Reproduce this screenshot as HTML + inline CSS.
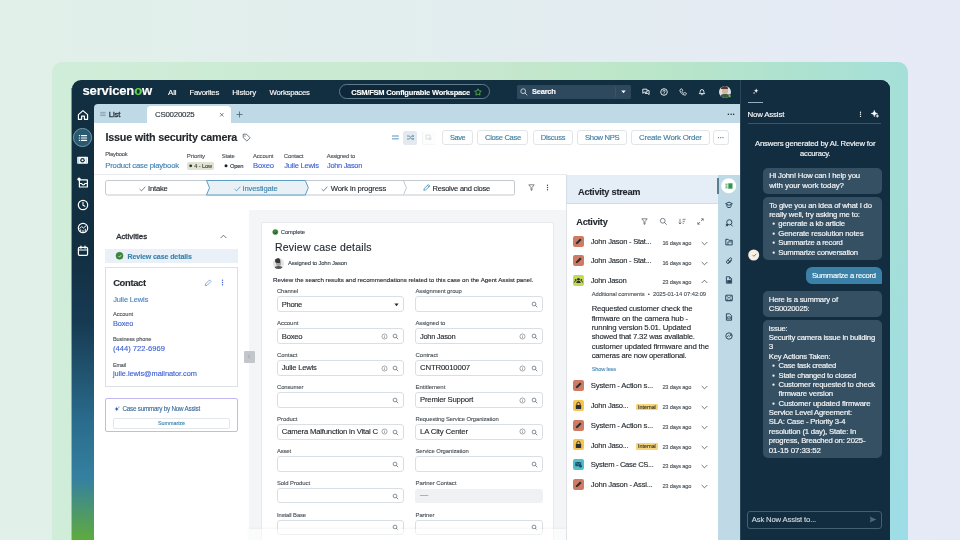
<!DOCTYPE html>
<html lang="en"><head><meta charset="utf-8"><title>CSM/FSM Configurable Workspace</title>
<style>
html,body{margin:0;padding:0}
body{width:960px;height:540px;overflow:hidden;position:relative;font-family:"Liberation Sans",sans-serif;background:linear-gradient(90deg,#e1f0e9 0%,#e3edf0 55%,#e6eaf7 100%)}
.b{position:absolute;box-sizing:border-box;display:block}
.t{position:absolute;white-space:pre;line-height:1;display:block;-webkit-text-stroke-width:.12px}
svg{overflow:visible}
#w{position:absolute;left:0;top:0;width:960px;height:540px;will-change:transform}
</style></head><body><div id="w">
<div class="b" style="left:52.00px;top:62.00px;width:856.00px;height:478.00px;border-radius:10px 10px 0 0;background:linear-gradient(125deg,rgba(149,218,251,0) 80%,rgba(149,218,251,.45) 100%),linear-gradient(90deg,#d0edd9 0%,#c7e8ce 50%,#bce6c8 68%,#aee2cf 86%,#a4dfd8 100%);"></div>
<div class="b" style="left:72.00px;top:80.00px;width:818.00px;height:460.00px;background:#122e41;border-radius:9px 9px 0 0;"></div>
<div class="b" style="left:71.00px;top:88.00px;width:1.00px;height:452.00px;opacity:.45;background:linear-gradient(180deg,#122e41 0%,#122e41 35.8%,#173a53 52%,#2a6d8e 74%,#3580a0 87%,#4a9570 93%,#5fab3e 100%);"></div>
<div class="b" style="left:72.00px;top:250.00px;width:22.00px;height:290.00px;background:linear-gradient(180deg,#122e41 0%,#173a53 25%,#2a6d8e 60%,#3580a0 79%,#4a9570 89%,#5fab3e 100%);"></div>
<div class="b" style="left:740.00px;top:80.00px;width:150.00px;height:460.00px;background:#122d40;border-radius:0 9px 0 0;border-left:1px solid #2a4657;"></div>
<span class="t" style="left:82.50px;top:84px;font-size:13.1px;color:#fff;letter-spacing:-0.186px;font-weight:700;">servicen<span style="color:#62d64a">o</span>w</span>
<span class="t" style="left:168.00px;top:89px;font-size:8.0px;color:#fff;letter-spacing:-0.130px;">All</span>
<span class="t" style="left:189.50px;top:89px;font-size:7.8px;color:#fff;letter-spacing:-0.286px;">Favorites</span>
<span class="t" style="left:232.20px;top:89px;font-size:8.0px;color:#fff;letter-spacing:-0.156px;">History</span>
<span class="t" style="left:269.50px;top:89px;font-size:7.8px;color:#fff;letter-spacing:-0.257px;">Workspaces</span>
<div class="b" style="left:339.20px;top:84.20px;width:151.30px;height:15.00px;background:#0f2839;border:1px solid #617c8c;border-radius:8px;"></div>
<span class="t" style="left:351.20px;top:89px;font-size:7.5px;color:#fff;letter-spacing:-0.203px;font-weight:700;">CSM/FSM Configurable Workspace</span>
<svg class="b" style="left:473.50px;top:87.50px;" width="8" height="8" viewBox="0 0 8 8"><path d="M4 .8l1 2.1 2.3.3-1.7 1.6.4 2.3L4 6 1.9 7.1l.4-2.3L.7 3.2 3 2.9z" fill="none" stroke="#58bd47" stroke-width=".8" stroke-linejoin="round"/></svg>
<div class="b" style="left:517.00px;top:85.00px;width:113.80px;height:13.80px;background:#2e495d;border-radius:1.5px;"></div>
<div class="b" style="left:615.00px;top:87.00px;width:1.00px;height:10.00px;background:#3a5467;"></div>
<svg class="b" style="left:520.30px;top:88.00px;" width="8" height="8" viewBox="0 0 8 8"><circle cx="3.200" cy="3.200" r="2.400" fill="none" stroke="#dfe6ea" stroke-width=".8"/><path d="M5 5L7 7" stroke="#dfe6ea" stroke-width=".8" stroke-linecap="round"/></svg>
<span class="t" style="left:532.00px;top:88px;font-size:7.5px;color:#fff;letter-spacing:-0.236px;font-weight:700;">Search</span>
<svg class="b" style="left:620.50px;top:90.00px;" width="5" height="4" viewBox="0 0 5 4"><path d="M.3.5h4.4L2.5 3.3z" fill="#fff"/></svg>
<svg class="b" style="left:642.00px;top:87.50px;" width="8" height="8" viewBox="0 0 8 8"><path d="M.8 1.2h4.2v3H2.2L.8 5.3z" fill="none" stroke="#f4f7f9" stroke-width=".9" stroke-linejoin="round"/><path d="M3.2 4.4v1.1h2.6l1.3 1.1V2.6H5.3" fill="none" stroke="#f4f7f9" stroke-width=".9" stroke-linejoin="round"/></svg>
<svg class="b" style="left:660.20px;top:87.50px;" width="8" height="8" viewBox="0 0 8 8"><circle cx="4" cy="4" r="3.3" fill="none" stroke="#f4f7f9" stroke-width=".9"/><path d="M2.9 3.2a1.1 1.1 0 1 1 1.6 1c-.4.2-.5.4-.5.8" fill="none" stroke="#f4f7f9" stroke-width=".9" stroke-linecap="round"/><circle cx="4" cy="6" r=".45" fill="#f4f7f9"/></svg>
<svg class="b" style="left:679.30px;top:87.50px;" width="8" height="8" viewBox="0 0 8 8"><path d="M2 .9c.5-.3 1-.1 1.200.400l.4 1c.1.400-.1.700-.4.900l-.3.200c.4.900 1 1.500 1.900 1.900l.2-.3c.2-.3.500-.5.900-.4l1 .4c.5.200.7.700.4 1.200-.4.700-1.100 1-1.900.800C3.300 6.600 1.400 4.700.9 2.700.8 2 1.300 1.300 2 .9z" fill="none" stroke="#f4f7f9" stroke-width=".85" stroke-linejoin="round"/></svg>
<svg class="b" style="left:698.00px;top:87.50px;" width="8" height="8" viewBox="0 0 8 8"><path d="M1.300 5.600c.7-.5.900-1.200.9-2.200a1.800 1.800 0 0 1 3.600 0c0 1 .2 1.700.9 2.200z" fill="none" stroke="#f4f7f9" stroke-width=".9" stroke-linejoin="round"/><path d="M3.300 6.600a.8.800 0 0 0 1.400 0" fill="none" stroke="#f4f7f9" stroke-width=".9" stroke-linecap="round"/></svg>
<div class="b" style="left:718.50px;top:85.50px;width:12.40px;height:12.40px;border-radius:50%;background:#dfe3e3;overflow:hidden;"><i style="position:absolute;left:3.200px;top:1.300px;width:6.200px;height:7px;border-radius:3px 3px 2.600px 2.600px;background:#d9b39a"></i><i style="position:absolute;left:2.800px;top:.6px;width:7px;height:3.200px;border-radius:3px 3px 0 0;background:#4a3a30"></i><i style="position:absolute;left:1px;top:8.600px;width:10.400px;height:5px;border-radius:4px 4px 0 0;background:#3f5a4a"></i></div>
<svg class="b" style="left:726.00px;top:93.00px" width="8" height="8" viewBox="0 0 8 8"><circle cx="3.5" cy="3" r="1.5" fill="#6fcf3d" stroke="#122e41" stroke-width="0.5"/></svg>
<svg class="b" style="left:76.50px;top:109.00px;" width="11.99" height="11.99" viewBox="0 0 11 11"><path d="M1.300 5.200L5.500 1.500l4.200 3.700v4.300H6.800V6.600H4.200v2.900H1.300z" fill="none" stroke="#ffffff" stroke-width="1.100" stroke-linejoin="round"/></svg>
<svg class="b" style="left:71.00px;top:126.00px" width="24.2" height="24.2" viewBox="0 0 24.2 24.2"><circle cx="11.5" cy="11.5" r="9.1" fill="#2b5970" stroke="#7199aa" stroke-width="1"/></svg>
<svg class="b" style="left:77.50px;top:132.50px;" width="10" height="10" viewBox="0 0 10 10"><g stroke="#ffffff" stroke-width="1.100" stroke-linecap="round"><path d="M3.400 2.600h5.200M3.400 5h5.200M3.400 7.400h5.200"/><path d="M1.300 2.600h.3M1.300 5h.3M1.300 7.400h.3"/></g></svg>
<svg class="b" style="left:77.00px;top:155.00px;" width="11" height="10" viewBox="0 0 11 10"><rect x=".2" y="1.800" width="10.800" height="6.900" rx=".8" fill="#ffffff"/><circle cx="5.500" cy="5.250" r="2.300" fill="#122e41"/><circle cx="5.500" cy="5.250" r="1.100" fill="#ffffff"/><path d="M1.700 2.500v5.500M9.300 2.500v5.500" stroke="#9fb8c8" stroke-width=".7"/></svg>
<svg class="b" style="left:76.50px;top:176.50px;" width="11.99" height="11.99" viewBox="0 0 11 11"><path d="M2.200 2.600h7.300v6.600H2.200z" fill="none" stroke="#ffffff" stroke-width="1.100" stroke-linejoin="round"/><path d="M2.200 5.900h2.100c.2 1 .7 1.300 1.500 1.300s1.300-.3 1.500-1.300h2.200" fill="none" stroke="#ffffff" stroke-width="1"/><circle cx="1.900" cy="2" r="1.500" fill="#ffffff"/></svg>
<svg class="b" style="left:76.50px;top:199.00px;" width="11.99" height="11.99" viewBox="0 0 11 11"><circle cx="5.500" cy="5.500" r="4.300" fill="none" stroke="#ffffff" stroke-width="1.100"/><path d="M5.500 3v2.700l1.700 1" fill="none" stroke="#ffffff" stroke-width="1" stroke-linecap="round"/></svg>
<svg class="b" style="left:76.50px;top:221.50px;" width="11.99" height="11.99" viewBox="0 0 11 11"><circle cx="5.500" cy="5.500" r="4.300" fill="none" stroke="#ffffff" stroke-width="1.100"/><path d="M2.300 6.200l2-2 1.600 1.300 2.600-2.300M3.400 9V6.800M5.500 9.300V7.300M7.600 9V6.200" fill="none" stroke="#ffffff" stroke-width=".9"/></svg>
<svg class="b" style="left:76.50px;top:244.50px;" width="11.99" height="11.99" viewBox="0 0 11 11"><rect x="1.300" y="2.200" width="8.400" height="7.300" rx="1" fill="none" stroke="#ffffff" stroke-width="1.100"/><path d="M1.300 4.600h8.400M3.600 1v2M7.400 1v2" stroke="#ffffff" stroke-width="1.100" stroke-linecap="round"/></svg>
<div class="b" style="left:94.00px;top:103.80px;width:646.00px;height:19.00px;background:#c0d9e6;border-radius:4px 0 0 0;"></div>
<svg class="b" style="left:100.00px;top:111.00px;" width="6" height="6" viewBox="0 0 6 6"><path d="M.2 1.400h5.400M.2 3h5.400M.2 4.600h5.400" stroke="#7d9bb0" stroke-width=".8"/></svg>
<span class="t" style="left:108.80px;top:111px;font-size:7.8px;color:#28323a;letter-spacing:-0.185px;-webkit-text-stroke-width:.3px;">List</span>
<div class="b" style="left:147.00px;top:106.00px;width:83.50px;height:17.00px;background:#fff;border-radius:4px 4px 0 0;"></div>
<span class="t" style="left:155.00px;top:111px;font-size:7.9px;color:#28323a;letter-spacing:-0.248px;">CS0020025</span>
<svg class="b" style="left:218.50px;top:111.80px;" width="5.5" height="5.5" viewBox="0 0 5.5 5.5"><path d="M1 1l3.500 3.500M4.500 1L1 4.500" stroke="#4a555d" stroke-width=".7"/></svg>
<svg class="b" style="left:236.00px;top:110.50px;" width="7" height="7" viewBox="0 0 7 7"><path d="M3.500.5v6M.5 3.500h6" stroke="#44657c" stroke-width=".8"/></svg>
<span class="t" style="left:727.50px;top:112px;font-size:5.0px;color:#1f2a33;letter-spacing:0.916px;">•••</span>
<div class="b" style="left:94.00px;top:122.60px;width:646.00px;height:418.00px;background:#fff;"></div>
<span class="t" style="left:105.50px;top:132px;font-size:10.8px;color:#23292e;letter-spacing:-0.230px;font-weight:700;">Issue with security camera</span>
<svg class="b" style="left:241.50px;top:133.00px;" width="9" height="9" viewBox="0 0 9 9"><path d="M1.200 1.200h3.300l3.600 3.600-3.300 3.300L1.200 4.500z" fill="none" stroke="#4a555d" stroke-width=".8" stroke-linejoin="round"/><circle cx="3" cy="3" r=".6" fill="#4a555d"/></svg>
<svg class="b" style="left:392.00px;top:135.00px;" width="7" height="5" viewBox="0 0 7 5"><path d="M0 1h6.800M0 3.800h6.800" stroke="#90b7d6" stroke-width="1.600"/></svg>
<div class="b" style="left:403.00px;top:130.50px;width:14.20px;height:14.20px;background:#e3e9ef;border-radius:2px;"></div>
<svg class="b" style="left:405.80px;top:133.40px;" width="9" height="9" viewBox="0 0 9 9"><g fill="none" stroke="#3f86a8" stroke-width=".8"><path d="M1 3h2c1.500 0 1.500 3 3 3h1.500M1 6h2c.6 0 1-.4 1.300-.9M5 3.800C5.300 3.300 5.600 3 6 3h1.500"/><path d="M6.600 1.900L7.700 3 6.600 4.100M6.600 4.900L7.700 6 6.600 7.100"/></g></svg>
<div class="b" style="left:421.50px;top:130.50px;width:14.20px;height:14.20px;background:#fdfdfd;border-radius:2px;border-left:1px solid #f1f2f3;border-bottom:1px solid #f4f5f6;"></div>
<svg class="b" style="left:425.00px;top:134.00px;" width="7" height="7" viewBox="0 0 7 7"><path d="M1 1h4.200v3.400H2.600L1 5.600z" fill="none" stroke="#d8dde1" stroke-width=".9"/><path d="M3.300 5.500h2.600V3" fill="none" stroke="#d8dde1" stroke-width=".9"/></svg>
<div class="b" style="left:442.00px;top:130.00px;width:31.00px;height:14.70px;background:#fff;border:1px solid #e1e5e8;border-radius:3px;"></div>
<span class="t" style="left:450.00px;top:134px;font-size:7.4px;color:#3a7c9f;letter-spacing:-0.417px;">Save</span>
<div class="b" style="left:476.80px;top:130.00px;width:51.50px;height:14.70px;background:#fff;border:1px solid #e1e5e8;border-radius:3px;"></div>
<span class="t" style="left:485.00px;top:134px;font-size:7.6px;color:#3a7c9f;letter-spacing:-0.348px;">Close Case</span>
<div class="b" style="left:532.50px;top:130.00px;width:40.80px;height:14.70px;background:#fff;border:1px solid #e1e5e8;border-radius:3px;"></div>
<span class="t" style="left:540.80px;top:134px;font-size:7.6px;color:#3a7c9f;letter-spacing:-0.301px;">Discuss</span>
<div class="b" style="left:577.20px;top:130.00px;width:49.80px;height:14.70px;background:#fff;border:1px solid #e1e5e8;border-radius:3px;"></div>
<span class="t" style="left:585.00px;top:134px;font-size:7.7px;color:#3a7c9f;letter-spacing:-0.367px;">Show NPS</span>
<div class="b" style="left:631.20px;top:130.00px;width:78.80px;height:14.70px;background:#fff;border:1px solid #e1e5e8;border-radius:3px;"></div>
<span class="t" style="left:639.00px;top:134px;font-size:7.9px;color:#3a7c9f;letter-spacing:-0.223px;">Create Work Order</span>
<div class="b" style="left:713.30px;top:130.00px;width:15.50px;height:14.70px;background:#fff;border:1px solid #e1e5e8;border-radius:3px;"></div>
<span class="t" style="left:717.80px;top:136px;font-size:4.0px;color:#3a7c9f;letter-spacing:0.833px;">•••</span>
<span class="t" style="left:105.30px;top:152px;font-size:5.8px;color:#4a5258;letter-spacing:-0.208px;">Playbook</span>
<span class="t" style="left:105.30px;top:162px;font-size:7.7px;color:#3d7fb4;letter-spacing:-0.200px;">Product case playbook</span>
<span class="t" style="left:186.80px;top:153px;font-size:6.1px;color:#4a5258;letter-spacing:-0.098px;">Priority</span>
<div class="b" style="left:187.00px;top:162.00px;width:27.00px;height:7.50px;background:#e0e3d0;border-radius:2px;"></div>
<svg class="b" style="left:188.00px;top:163.00px" width="6.8" height="6.8" viewBox="0 0 6.8 6.8"><circle cx="2.7" cy="2.8" r="1.4" fill="#2a2f33"/></svg>
<span class="t" style="left:194.20px;top:164px;font-size:5.6px;color:#3c4146;letter-spacing:-0.081px;">4 - Low</span>
<span class="t" style="left:221.80px;top:154px;font-size:5.9px;color:#4a5258;letter-spacing:-0.215px;">State</span>
<svg class="b" style="left:223.00px;top:163.00px" width="7" height="7" viewBox="0 0 7 7"><circle cx="3" cy="2.8" r="1.5" fill="#1d2226"/></svg>
<span class="t" style="left:230.00px;top:164px;font-size:5.8px;color:#2a2f33;letter-spacing:-0.247px;">Open</span>
<span class="t" style="left:253.00px;top:154px;font-size:5.9px;color:#4a5258;letter-spacing:-0.146px;">Account</span>
<span class="t" style="left:253.00px;top:162px;font-size:7.7px;color:#3b5fd2;letter-spacing:-0.207px;">Boxeo</span>
<span class="t" style="left:283.80px;top:153px;font-size:6.0px;color:#4a5258;letter-spacing:-0.168px;">Contact</span>
<span class="t" style="left:284.30px;top:162px;font-size:7.6px;color:#3b5fd2;letter-spacing:-0.243px;">Julie Lewis</span>
<span class="t" style="left:326.80px;top:154px;font-size:5.8px;color:#4a5258;letter-spacing:-0.192px;">Assigned to</span>
<span class="t" style="left:327.00px;top:162px;font-size:7.4px;color:#3b5fd2;letter-spacing:-0.285px;">John Jason</span>
<div class="b" style="left:94.00px;top:174.30px;width:472.50px;height:1.00px;background:#e8eaed;"></div>
<svg class="b" style="left:105.00px;top:180.00px;" width="410" height="16" viewBox="0 0 410 16">
<path d="M.5 2.500a2 2 0 0 1 2-2H408a1.500 1.500 0 0 1 1.500 1.500v11.500a1.500 1.500 0 0 1 -1.500 1.500H2.500a2 2 0 0 1 -2-2z" fill="#fff" stroke="#c3cad0" stroke-width="1"/>
<path d="M101.500.5H200.300L203.300 7.750 200.300 15H101.500L104.500 7.750z" fill="#e9f1f6" stroke="#5c9dc2" stroke-width="1" stroke-linejoin="round"/>
<path d="M298.500.8L301.500 7.750 298.500 14.700" fill="none" stroke="#c3cad0" stroke-width="1"/>
</svg>
<svg class="b" style="left:139.10px;top:186.00px;" width="7" height="5.5" viewBox="0 0 7 5.5"><path d="M.6 3l1.900 1.900L6.300.7" fill="none" stroke="#5a646b" stroke-width=".8"/></svg>
<span class="t" style="left:148.00px;top:185px;font-size:7.6px;color:#23292e;letter-spacing:-0.184px;">Intake</span>
<svg class="b" style="left:234.10px;top:186.00px;" width="7" height="5.5" viewBox="0 0 7 5.5"><path d="M.6 3l1.900 1.900L6.300.7" fill="none" stroke="#4f93b8" stroke-width=".8"/></svg>
<span class="t" style="left:242.50px;top:185px;font-size:7.6px;color:#3a83ab;letter-spacing:-0.151px;">Investigate</span>
<svg class="b" style="left:321.20px;top:186.00px;" width="7" height="5.5" viewBox="0 0 7 5.5"><path d="M.6 3l1.900 1.900L6.300.7" fill="none" stroke="#5a646b" stroke-width=".8"/></svg>
<span class="t" style="left:330.80px;top:185px;font-size:7.7px;color:#23292e;letter-spacing:-0.160px;">Work in progress</span>
<svg class="b" style="left:423.00px;top:184.30px;" width="8" height="7" viewBox="0 0 8 7"><path d="M.8 6.300l.5-2L5.400.6l1.500 1.500-4.100 3.700zM4.500 1.500l1.500 1.500" fill="none" stroke="#4a90b6" stroke-width=".85" stroke-linejoin="round"/></svg>
<span class="t" style="left:432.50px;top:185px;font-size:7.5px;color:#23292e;letter-spacing:-0.223px;">Resolve and close</span>
<svg class="b" style="left:528.00px;top:184.00px;" width="7" height="7" viewBox="0 0 7 7"><path d="M.8.800h5.400L4 3.600v2.600H3V3.600z" fill="none" stroke="#4a555d" stroke-width=".7" stroke-linejoin="round"/></svg>
<svg class="b" style="left:545.50px;top:184.00px;" width="3" height="7" viewBox="0 0 3 7"><circle cx="1.500" cy="1.200" r=".7" fill="#3a444b"/><circle cx="1.500" cy="3.500" r=".7" fill="#3a444b"/><circle cx="1.500" cy="5.800" r=".7" fill="#3a444b"/></svg>
<span class="t" style="left:116.20px;top:233px;font-size:7.9px;color:#2a3036;letter-spacing:-0.017px;-webkit-text-stroke:.3px #2a3036;">Activities</span>
<svg class="b" style="left:219.50px;top:233.50px;" width="7" height="5" viewBox="0 0 7 5"><path d="M.7 4L3.500 1.200 6.300 4" fill="none" stroke="#4a555d" stroke-width=".8"/></svg>
<div class="b" style="left:105.00px;top:249.00px;width:132.50px;height:14.00px;background:#e9f0f8;"></div>
<svg class="b" style="left:114.00px;top:250.00px" width="12" height="12" viewBox="0 0 12 12"><circle cx="5.5" cy="5.8" r="3.5" fill="#3a8a36" stroke="#2c6a2a" stroke-width="0.5"/></svg>
<svg class="b" style="left:117.50px;top:253.80px;" width="4" height="4" viewBox="0 0 4 4"><path d="M.6 2.100l1 1L3.400.9" fill="none" stroke="#fff" stroke-width=".7"/></svg>
<span class="t" style="left:127.50px;top:254px;font-size:7.1px;color:#3a83ab;letter-spacing:-0.126px;font-weight:700;">Review case details</span>
<div class="b" style="left:105.00px;top:267.00px;width:133.00px;height:119.50px;background:#fff;border:1px solid #dbe0e4;"></div>
<span class="t" style="left:113.20px;top:278px;font-size:9.4px;color:#23292e;letter-spacing:-0.341px;font-weight:700;">Contact</span>
<svg class="b" style="left:203.50px;top:278.50px;" width="8" height="8" viewBox="0 0 8 8"><path d="M1.200 6.800l.5-2L5.600.9l1.500 1.500-3.900 3.900z" fill="none" stroke="#5b86d8" stroke-width=".7" stroke-linejoin="round"/></svg>
<svg class="b" style="left:221.30px;top:279.00px;" width="3" height="7" viewBox="0 0 3 7"><circle cx="1.500" cy="1.200" r=".7" fill="#3b5fd2"/><circle cx="1.500" cy="3.500" r=".7" fill="#3b5fd2"/><circle cx="1.500" cy="5.800" r=".7" fill="#3b5fd2"/></svg>
<span class="t" style="left:113.20px;top:296px;font-size:7.4px;color:#4682bd;letter-spacing:-0.100px;">Julie Lewis</span>
<span class="t" style="left:113.00px;top:312px;font-size:5.7px;color:#4a5258;letter-spacing:-0.085px;">Account</span>
<span class="t" style="left:113.00px;top:320px;font-size:7.4px;color:#3b5fd2;letter-spacing:-0.137px;">Boxeo</span>
<span class="t" style="left:113.00px;top:337px;font-size:5.6px;color:#4a5258;letter-spacing:-0.111px;">Business phone</span>
<span class="t" style="left:113.00px;top:345px;font-size:7.6px;color:#3b5fd2;letter-spacing:0.002px;">(444) 722-6969</span>
<span class="t" style="left:113.00px;top:363px;font-size:5.5px;color:#4a5258;letter-spacing:-0.191px;">Email</span>
<span class="t" style="left:113.00px;top:370px;font-size:7.4px;color:#3b5fd2;letter-spacing:-0.050px;">julie.lewis@mailnator.com</span>
<div class="b" style="left:105.00px;top:398.00px;width:133.00px;height:33.50px;background:#fff;border:1px solid #c2b9f4;border-radius:2px;"></div>
<svg class="b" style="left:113.80px;top:406.00px;" width="6" height="6" viewBox="0 0 6 6"><path d="M2.700.6c.3 1.700.8 2.200 2.500 2.500-1.700.3-2.200.8-2.500 2.500-.3-1.700-.8-2.200-2.500-2.500 1.700-.3 2.200-.8 2.500-2.500z" fill="#2f5fb0"/><circle cx="4.900" cy="1.100" r=".55" fill="#2f5fb0"/></svg>
<span class="t" style="left:122.50px;top:406px;font-size:6.3px;color:#3d6c9c;letter-spacing:-0.224px;">Case summary by Now Assist</span>
<div class="b" style="left:113.00px;top:418.00px;width:117.00px;height:10.60px;background:#fff;border:1px solid #e3e7ea;border-radius:2px;"></div>
<span class="t" style="left:158.00px;top:421px;font-size:5.4px;color:#3a83ab;letter-spacing:-0.034px;">Summarize</span>
<div class="b" style="left:249.30px;top:210.00px;width:317.00px;height:330.00px;background:#f4f5f6;"></div>
<div class="b" style="left:244.00px;top:351.00px;width:11.00px;height:11.50px;background:#c3c7cb;border-radius:1px;"></div>
<svg class="b" style="left:247.30px;top:354.30px;" width="4" height="5" viewBox="0 0 4 5"><path d="M2.800.8L1.200 2.500l1.600 1.700" fill="none" stroke="#8a9096" stroke-width=".7"/></svg>
<div class="b" style="left:261.30px;top:222.00px;width:293.00px;height:320.00px;background:#fff;border:1px solid #e7e9ec;border-radius:2px;"></div>
<svg class="b" style="left:271.00px;top:228.00px" width="10" height="10" viewBox="0 0 10 10"><circle cx="4.3" cy="4" r="2.6" fill="#3a8a36" stroke="#2c6a2a" stroke-width="0.4"/></svg>
<svg class="b" style="left:273.50px;top:230.60px;" width="3.6" height="3" viewBox="0 0 3.6 3"><path d="M.5 1.500l.9.9L3.100.6" fill="none" stroke="#14301a" stroke-width=".7"/></svg>
<span class="t" style="left:280.80px;top:230px;font-size:5.8px;color:#3c4349;letter-spacing:-0.078px;">Complete</span>
<span class="t" style="left:275.00px;top:242px;font-size:10.5px;color:#23292e;letter-spacing:0.211px;">Review case details</span>
<div class="b" style="left:272.80px;top:257.80px;width:11.00px;height:11.00px;border-radius:50%;background:#e4e4e4;overflow:hidden;"><i style="position:absolute;left:3px;top:1.500px;width:5.500px;height:6.500px;border-radius:2.700px;background:#a9a29c"></i><i style="position:absolute;left:2px;top:.5px;width:5px;height:4.500px;border-radius:3px 2px 0 2px;background:#3a3836"></i><i style="position:absolute;left:.8px;top:7.800px;width:9.500px;height:5px;border-radius:4px 4px 0 0;background:#55585a"></i></div>
<span class="t" style="left:288.00px;top:261px;font-size:5.9px;color:#3c4349;letter-spacing:-0.166px;">Assigned to John Jason</span>
<span class="t" style="left:273.00px;top:277px;font-size:6.2px;color:#23292e;letter-spacing:-0.001px;">Review the search results and recommendations related to this case on the Agent Assist panel.</span>
<span class="t" style="left:277.00px;top:289px;font-size:5.9px;color:#4a5258;letter-spacing:-0.140px;">Channel</span>
<div class="b" style="left:277.00px;top:296.00px;width:127.30px;height:16.00px;background:#fff;border:1px solid #dadfe3;border-radius:3px;"></div>
<span class="t" style="left:281.80px;top:301px;font-size:7.6px;color:#23292e;letter-spacing:-0.355px;">Phone</span>
<svg class="b" style="left:394.00px;top:302.80px;" width="5" height="4" viewBox="0 0 5 4"><path d="M.4.400h4.200L2.500 3.200z" fill="#23292e"/></svg>
<span class="t" style="left:277.00px;top:320px;font-size:6.0px;color:#4a5258;letter-spacing:-0.054px;">Account</span>
<div class="b" style="left:277.00px;top:328.00px;width:127.30px;height:16.00px;background:#fff;border:1px solid #dadfe3;border-radius:3px;"></div>
<span class="t" style="left:281.80px;top:333px;font-size:7.7px;color:#23292e;letter-spacing:-0.267px;">Boxeo</span>
<svg class="b" style="left:381.00px;top:332.70px;" width="7" height="7" viewBox="0 0 7 7"><circle cx="3.500" cy="3.500" r="2.550" fill="none" stroke="#5a636b" stroke-width=".55"/><path d="M3.500 3.300v1.600" stroke="#5a636b" stroke-width=".6"/><circle cx="3.500" cy="2.300" r=".35" fill="#5a636b"/></svg>
<svg class="b" style="left:392.30px;top:333.00px;" width="7" height="7" viewBox="0 0 7 7"><circle cx="3" cy="3" r="1.900" fill="none" stroke="#5a636b" stroke-width="0.7"/><path d="M4.450 4.450l1.500 1.500" stroke="#5a636b" stroke-width="0.75" stroke-linecap="round"/></svg>
<span class="t" style="left:277.00px;top:352px;font-size:6.0px;color:#4a5258;letter-spacing:-0.054px;">Contact</span>
<div class="b" style="left:277.00px;top:360.00px;width:127.30px;height:16.00px;background:#fff;border:1px solid #dadfe3;border-radius:3px;"></div>
<span class="t" style="left:281.80px;top:364px;font-size:7.6px;color:#23292e;letter-spacing:-0.225px;">Julie Lewis</span>
<svg class="b" style="left:381.00px;top:364.60px;" width="7" height="7" viewBox="0 0 7 7"><circle cx="3.500" cy="3.500" r="2.550" fill="none" stroke="#5a636b" stroke-width=".55"/><path d="M3.500 3.300v1.600" stroke="#5a636b" stroke-width=".6"/><circle cx="3.500" cy="2.300" r=".35" fill="#5a636b"/></svg>
<svg class="b" style="left:392.30px;top:364.90px;" width="7" height="7" viewBox="0 0 7 7"><circle cx="3" cy="3" r="1.900" fill="none" stroke="#5a636b" stroke-width="0.7"/><path d="M4.450 4.450l1.500 1.500" stroke="#5a636b" stroke-width="0.75" stroke-linecap="round"/></svg>
<span class="t" style="left:277.00px;top:385px;font-size:5.9px;color:#4a5258;letter-spacing:-0.115px;">Consumer</span>
<div class="b" style="left:277.00px;top:392.00px;width:127.30px;height:16.00px;background:#fff;border:1px solid #dadfe3;border-radius:3px;"></div>
<svg class="b" style="left:392.30px;top:396.80px;" width="7" height="7" viewBox="0 0 7 7"><circle cx="3" cy="3" r="1.900" fill="none" stroke="#5a636b" stroke-width="0.7"/><path d="M4.450 4.450l1.500 1.500" stroke="#5a636b" stroke-width="0.75" stroke-linecap="round"/></svg>
<span class="t" style="left:277.00px;top:416px;font-size:6.0px;color:#4a5258;letter-spacing:-0.054px;">Product</span>
<div class="b" style="left:277.00px;top:424.00px;width:127.30px;height:16.00px;background:#fff;border:1px solid #dadfe3;border-radius:3px;"></div>
<span class="t" style="left:281.80px;top:428px;font-size:7.7px;color:#23292e;letter-spacing:-0.190px;">Camera Malfunction in Vital C</span>
<svg class="b" style="left:381.00px;top:428.40px;" width="7" height="7" viewBox="0 0 7 7"><circle cx="3.500" cy="3.500" r="2.550" fill="none" stroke="#5a636b" stroke-width=".55"/><path d="M3.500 3.300v1.600" stroke="#5a636b" stroke-width=".6"/><circle cx="3.500" cy="2.300" r=".35" fill="#5a636b"/></svg>
<svg class="b" style="left:392.30px;top:428.70px;" width="7" height="7" viewBox="0 0 7 7"><circle cx="3" cy="3" r="1.900" fill="none" stroke="#5a636b" stroke-width="0.7"/><path d="M4.450 4.450l1.500 1.500" stroke="#5a636b" stroke-width="0.75" stroke-linecap="round"/></svg>
<span class="t" style="left:277.00px;top:449px;font-size:5.8px;color:#4a5258;letter-spacing:-0.101px;">Asset</span>
<div class="b" style="left:277.00px;top:456.00px;width:127.30px;height:16.00px;background:#fff;border:1px solid #dadfe3;border-radius:3px;"></div>
<svg class="b" style="left:392.30px;top:460.60px;" width="7" height="7" viewBox="0 0 7 7"><circle cx="3" cy="3" r="1.900" fill="none" stroke="#5a636b" stroke-width="0.7"/><path d="M4.450 4.450l1.500 1.500" stroke="#5a636b" stroke-width="0.75" stroke-linecap="round"/></svg>
<span class="t" style="left:277.00px;top:481px;font-size:5.9px;color:#4a5258;letter-spacing:-0.065px;">Sold Product</span>
<div class="b" style="left:277.00px;top:488.00px;width:127.30px;height:15.00px;background:#fff;border:1px solid #dadfe3;border-radius:3px;"></div>
<svg class="b" style="left:392.30px;top:492.50px;" width="7" height="7" viewBox="0 0 7 7"><circle cx="3" cy="3" r="1.900" fill="none" stroke="#5a636b" stroke-width="0.7"/><path d="M4.450 4.450l1.500 1.500" stroke="#5a636b" stroke-width="0.75" stroke-linecap="round"/></svg>
<span class="t" style="left:277.00px;top:513px;font-size:5.8px;color:#4a5258;letter-spacing:-0.082px;">Install Base</span>
<div class="b" style="left:277.00px;top:520.00px;width:127.30px;height:15.00px;background:#fff;border:1px solid #dadfe3;border-radius:3px;"></div>
<svg class="b" style="left:392.30px;top:524.40px;" width="7" height="7" viewBox="0 0 7 7"><circle cx="3" cy="3" r="1.900" fill="none" stroke="#5a636b" stroke-width="0.7"/><path d="M4.450 4.450l1.500 1.500" stroke="#5a636b" stroke-width="0.75" stroke-linecap="round"/></svg>
<span class="t" style="left:415.50px;top:289px;font-size:5.9px;color:#4a5258;letter-spacing:-0.078px;">Assignment group</span>
<div class="b" style="left:415.00px;top:296.00px;width:127.60px;height:16.00px;background:#fff;border:1px solid #dadfe3;border-radius:3px;"></div>
<svg class="b" style="left:530.80px;top:301.10px;" width="7" height="7" viewBox="0 0 7 7"><circle cx="3" cy="3" r="1.900" fill="none" stroke="#5a636b" stroke-width="0.7"/><path d="M4.450 4.450l1.500 1.500" stroke="#5a636b" stroke-width="0.75" stroke-linecap="round"/></svg>
<span class="t" style="left:415.50px;top:321px;font-size:5.9px;color:#4a5258;letter-spacing:-0.094px;">Assigned to</span>
<div class="b" style="left:415.00px;top:328.00px;width:127.60px;height:16.00px;background:#fff;border:1px solid #dadfe3;border-radius:3px;"></div>
<span class="t" style="left:420.00px;top:333px;font-size:7.5px;color:#23292e;letter-spacing:-0.306px;">John Jason</span>
<svg class="b" style="left:519.30px;top:332.70px;" width="7" height="7" viewBox="0 0 7 7"><circle cx="3.500" cy="3.500" r="2.550" fill="none" stroke="#5a636b" stroke-width=".55"/><path d="M3.500 3.300v1.600" stroke="#5a636b" stroke-width=".6"/><circle cx="3.500" cy="2.300" r=".35" fill="#5a636b"/></svg>
<svg class="b" style="left:530.80px;top:333.00px;" width="7" height="7" viewBox="0 0 7 7"><circle cx="3" cy="3" r="1.900" fill="none" stroke="#5a636b" stroke-width="0.7"/><path d="M4.450 4.450l1.500 1.500" stroke="#5a636b" stroke-width="0.75" stroke-linecap="round"/></svg>
<span class="t" style="left:415.50px;top:352px;font-size:6.0px;color:#4a5258;letter-spacing:-0.022px;">Contract</span>
<div class="b" style="left:415.00px;top:360.00px;width:127.60px;height:16.00px;background:#fff;border:1px solid #dadfe3;border-radius:3px;"></div>
<span class="t" style="left:420.00px;top:364px;font-size:7.8px;color:#23292e;letter-spacing:-0.185px;">CNTR0010007</span>
<svg class="b" style="left:519.30px;top:364.60px;" width="7" height="7" viewBox="0 0 7 7"><circle cx="3.500" cy="3.500" r="2.550" fill="none" stroke="#5a636b" stroke-width=".55"/><path d="M3.500 3.300v1.600" stroke="#5a636b" stroke-width=".6"/><circle cx="3.500" cy="2.300" r=".35" fill="#5a636b"/></svg>
<svg class="b" style="left:530.80px;top:364.90px;" width="7" height="7" viewBox="0 0 7 7"><circle cx="3" cy="3" r="1.900" fill="none" stroke="#5a636b" stroke-width="0.7"/><path d="M4.450 4.450l1.500 1.500" stroke="#5a636b" stroke-width="0.75" stroke-linecap="round"/></svg>
<span class="t" style="left:415.50px;top:384px;font-size:6.0px;color:#4a5258;letter-spacing:-0.020px;">Entitlement</span>
<div class="b" style="left:415.00px;top:392.00px;width:127.60px;height:16.00px;background:#fff;border:1px solid #dadfe3;border-radius:3px;"></div>
<span class="t" style="left:420.00px;top:396px;font-size:7.7px;color:#23292e;letter-spacing:-0.184px;">Premier Support</span>
<svg class="b" style="left:519.30px;top:396.50px;" width="7" height="7" viewBox="0 0 7 7"><circle cx="3.500" cy="3.500" r="2.550" fill="none" stroke="#5a636b" stroke-width=".55"/><path d="M3.500 3.300v1.600" stroke="#5a636b" stroke-width=".6"/><circle cx="3.500" cy="2.300" r=".35" fill="#5a636b"/></svg>
<svg class="b" style="left:530.80px;top:396.80px;" width="7" height="7" viewBox="0 0 7 7"><circle cx="3" cy="3" r="1.900" fill="none" stroke="#5a636b" stroke-width="0.7"/><path d="M4.450 4.450l1.500 1.500" stroke="#5a636b" stroke-width="0.75" stroke-linecap="round"/></svg>
<span class="t" style="left:415.50px;top:417px;font-size:5.9px;color:#4a5258;letter-spacing:-0.095px;">Requesting Service Organization</span>
<div class="b" style="left:415.00px;top:424.00px;width:127.60px;height:16.00px;background:#fff;border:1px solid #dadfe3;border-radius:3px;"></div>
<span class="t" style="left:420.00px;top:428px;font-size:7.8px;color:#23292e;letter-spacing:-0.164px;">LA City Center</span>
<svg class="b" style="left:519.30px;top:428.40px;" width="7" height="7" viewBox="0 0 7 7"><circle cx="3.500" cy="3.500" r="2.550" fill="none" stroke="#5a636b" stroke-width=".55"/><path d="M3.500 3.300v1.600" stroke="#5a636b" stroke-width=".6"/><circle cx="3.500" cy="2.300" r=".35" fill="#5a636b"/></svg>
<svg class="b" style="left:530.80px;top:428.70px;" width="7" height="7" viewBox="0 0 7 7"><circle cx="3" cy="3" r="1.900" fill="none" stroke="#5a636b" stroke-width="0.7"/><path d="M4.450 4.450l1.500 1.500" stroke="#5a636b" stroke-width="0.75" stroke-linecap="round"/></svg>
<span class="t" style="left:415.50px;top:449px;font-size:5.9px;color:#4a5258;letter-spacing:-0.073px;">Service Organization</span>
<div class="b" style="left:415.00px;top:456.00px;width:127.60px;height:16.00px;background:#fff;border:1px solid #dadfe3;border-radius:3px;"></div>
<svg class="b" style="left:530.80px;top:460.60px;" width="7" height="7" viewBox="0 0 7 7"><circle cx="3" cy="3" r="1.900" fill="none" stroke="#5a636b" stroke-width="0.7"/><path d="M4.450 4.450l1.500 1.500" stroke="#5a636b" stroke-width="0.75" stroke-linecap="round"/></svg>
<span class="t" style="left:415.50px;top:480px;font-size:6.0px;color:#4a5258;letter-spacing:-0.081px;">Partner Contact</span>
<div class="b" style="left:415.00px;top:488.50px;width:127.60px;height:14.50px;background:#eff1f3;border-radius:2.500px;"></div>
<span class="t" style="left:420.00px;top:492px;font-size:8.2px;color:#8a9096;">—</span>
<span class="t" style="left:415.50px;top:513px;font-size:5.9px;color:#4a5258;letter-spacing:-0.050px;">Partner</span>
<div class="b" style="left:415.00px;top:520.00px;width:127.60px;height:15.00px;background:#fff;border:1px solid #dadfe3;border-radius:3px;"></div>
<svg class="b" style="left:530.80px;top:524.40px;" width="7" height="7" viewBox="0 0 7 7"><circle cx="3" cy="3" r="1.900" fill="none" stroke="#5a636b" stroke-width="0.7"/><path d="M4.450 4.450l1.500 1.500" stroke="#5a636b" stroke-width="0.75" stroke-linecap="round"/></svg>
<div class="b" style="left:249.00px;top:529.00px;width:317.00px;height:11.00px;background:rgba(255,255,255,.55);box-shadow:0 -1px 2px rgba(120,130,140,.08);"></div>
<div class="b" style="left:566.00px;top:175.00px;width:151.50px;height:365.00px;background:#fff;border-left:1px solid #dfe3e7;"></div>
<div class="b" style="left:566.00px;top:175.00px;width:151.50px;height:28.50px;background:#e5edf7;border-left:1px solid #d5dde6;border-bottom:1px solid #d3dbe4;"></div>
<span class="t" style="left:578.00px;top:188px;font-size:9.2px;color:#23292e;letter-spacing:-0.244px;font-weight:700;">Activity stream</span>
<span class="t" style="left:576.30px;top:218px;font-size:9.2px;color:#23292e;letter-spacing:-0.242px;font-weight:700;">Activity</span>
<svg class="b" style="left:640.80px;top:218.30px;" width="7" height="7" viewBox="0 0 7 7"><path d="M.8.800h5.400L4 3.600v2.600H3V3.600z" fill="none" stroke="#4a555d" stroke-width=".7" stroke-linejoin="round"/></svg>
<svg class="b" style="left:658.62px;top:217.43px;" width="8.75" height="8.75" viewBox="0 0 7 7"><circle cx="3" cy="3" r="1.900" fill="none" stroke="#4a555d" stroke-width="0.56"/><path d="M4.450 4.450l1.500 1.500" stroke="#4a555d" stroke-width="0.6" stroke-linecap="round"/></svg>
<svg class="b" style="left:677.50px;top:218.30px;" width="8" height="7" viewBox="0 0 8 7"><path d="M2 .8v5.200M.6 4.600L2 6l1.400-1.400M4.600 1.300h3M4.600 3.300h2.200M4.600 5.300h1.300" fill="none" stroke="#4a555d" stroke-width=".7"/></svg>
<svg class="b" style="left:697.00px;top:218.30px;" width="7" height="7" viewBox="0 0 7 7"><path d="M4.200.8h2v2M6.200.8L4 3M2.800 6.200h-2v-2M.8 6.200L3 4" fill="none" stroke="#4a555d" stroke-width=".7"/></svg>
<svg class="b" style="left:573.20px;top:235.80px;" width="11" height="11" viewBox="0 0 11 11"><rect width="11" height="11" rx="2" fill="#cf7a63"/><path d="M2.800 8.200l.5-2 3.800-3.800 1.500 1.500-3.800 3.800z" fill="#2b2f33"/></svg>
<span class="t" style="left:590.80px;top:238px;font-size:7.6px;color:#23292e;letter-spacing:-0.249px;">John Jason - Stat...</span>
<span class="t" style="left:662.40px;top:241px;font-size:5.7px;color:#4a5258;letter-spacing:-0.196px;">16 days ago</span>
<svg class="b" style="left:701.00px;top:241.00px;" width="7" height="5" viewBox="0 0 7 5"><path d="M.7 1L3.500 3.800 6.300 1" fill="none" stroke="#4a555d" stroke-width=".8"/></svg>
<svg class="b" style="left:573.20px;top:255.30px;" width="11" height="11" viewBox="0 0 11 11"><rect width="11" height="11" rx="2" fill="#cf7a63"/><path d="M2.800 8.200l.5-2 3.800-3.800 1.500 1.500-3.800 3.800z" fill="#2b2f33"/></svg>
<span class="t" style="left:590.80px;top:257px;font-size:7.6px;color:#23292e;letter-spacing:-0.249px;">John Jason - Stat...</span>
<span class="t" style="left:662.40px;top:261px;font-size:5.7px;color:#4a5258;letter-spacing:-0.196px;">16 days ago</span>
<svg class="b" style="left:701.00px;top:260.50px;" width="7" height="5" viewBox="0 0 7 5"><path d="M.7 1L3.500 3.800 6.300 1" fill="none" stroke="#4a555d" stroke-width=".8"/></svg>
<svg class="b" style="left:573.20px;top:274.70px;" width="11" height="11" viewBox="0 0 11 11"><rect width="11" height="11" rx="2" fill="#c0dc4e"/><circle cx="5.500" cy="4.300" r="1.300" fill="#2b2f33"/><path d="M3.300 8c0-1.500.9-2.200 2.200-2.200s2.200.7 2.200 2.200z" fill="#2b2f33"/><circle cx="2.700" cy="4.900" r=".9" fill="#2b2f33"/><circle cx="8.300" cy="4.900" r=".9" fill="#2b2f33"/><path d="M1.300 7.600c0-1 .5-1.600 1.500-1.600M9.700 7.600c0-1-.5-1.600-1.500-1.600" stroke="#2b2f33" stroke-width=".9" fill="none"/></svg>
<span class="t" style="left:590.80px;top:277px;font-size:7.6px;color:#23292e;letter-spacing:-0.337px;">John Jason</span>
<span class="t" style="left:662.40px;top:280px;font-size:5.7px;color:#4a5258;letter-spacing:-0.196px;">23 days ago</span>
<svg class="b" style="left:701.00px;top:279.40px;" width="7" height="5" viewBox="0 0 7 5"><path d="M.7 4L3.500 1.200 6.300 4" fill="none" stroke="#4a555d" stroke-width=".8"/></svg>
<span class="t" style="left:591.70px;top:292px;font-size:5.8px;color:#4a5258;letter-spacing:-0.041px;">Additional comments  •  2025-01-14 07:42:09</span>
<span class="t" style="left:591.70px;top:305px;font-size:7.7px;color:#23292e;letter-spacing:-0.191px;">Requested customer check the</span>
<span class="t" style="left:591.70px;top:315px;font-size:7.8px;color:#23292e;letter-spacing:-0.199px;">firmware on the camera hub -</span>
<span class="t" style="left:591.70px;top:324px;font-size:7.8px;color:#23292e;letter-spacing:-0.180px;">running version 5.01. Updated</span>
<span class="t" style="left:591.70px;top:333px;font-size:7.7px;color:#23292e;letter-spacing:-0.189px;">showed that 7.32 was available.</span>
<span class="t" style="left:591.70px;top:343px;font-size:7.8px;color:#23292e;letter-spacing:-0.164px;">customer updated firmware and the</span>
<span class="t" style="left:591.70px;top:352px;font-size:7.7px;color:#23292e;letter-spacing:-0.237px;">cameras are now operational.</span>
<span class="t" style="left:591.70px;top:367px;font-size:5.7px;color:#4a8db5;letter-spacing:-0.187px;">Show less</span>
<svg class="b" style="left:573.20px;top:380.10px;" width="11" height="11" viewBox="0 0 11 11"><rect width="11" height="11" rx="2" fill="#cf7a63"/><path d="M2.800 8.200l.5-2 3.800-3.800 1.500 1.500-3.800 3.800z" fill="#2b2f33"/></svg>
<span class="t" style="left:590.80px;top:382px;font-size:7.8px;color:#23292e;letter-spacing:-0.228px;">System - Action s...</span>
<span class="t" style="left:662.40px;top:385px;font-size:5.7px;color:#4a5258;letter-spacing:-0.196px;">23 days ago</span>
<svg class="b" style="left:701.00px;top:385.30px;" width="7" height="5" viewBox="0 0 7 5"><path d="M.7 1L3.500 3.800 6.300 1" fill="none" stroke="#4a555d" stroke-width=".8"/></svg>
<svg class="b" style="left:573.20px;top:400.00px;" width="11" height="11" viewBox="0 0 11 11"><rect width="11" height="11" rx="2" fill="#f5c451"/><rect x="2.800" y="5" width="5.400" height="4" rx=".6" fill="#2b2f33"/><path d="M3.900 5V3.900a1.600 1.600 0 0 1 3.200 0V5" fill="none" stroke="#2b2f33" stroke-width=".9"/></svg>
<span class="t" style="left:590.80px;top:402px;font-size:7.6px;color:#23292e;letter-spacing:-0.290px;">John Jaso...</span>
<span class="t" style="left:662.40px;top:405px;font-size:5.7px;color:#4a5258;letter-spacing:-0.196px;">23 days ago</span>
<svg class="b" style="left:701.00px;top:405.20px;" width="7" height="5" viewBox="0 0 7 5"><path d="M.7 1L3.500 3.800 6.300 1" fill="none" stroke="#4a555d" stroke-width=".8"/></svg>
<div class="b" style="left:636.20px;top:404.00px;width:21.40px;height:6.30px;background:#f7d57d;border-radius:1px;"></div>
<span class="t" style="left:638.00px;top:405px;font-size:5.4px;color:#33322a;letter-spacing:-0.026px;">Internal</span>
<svg class="b" style="left:573.20px;top:419.60px;" width="11" height="11" viewBox="0 0 11 11"><rect width="11" height="11" rx="2" fill="#cf7a63"/><path d="M2.800 8.200l.5-2 3.800-3.800 1.500 1.500-3.800 3.800z" fill="#2b2f33"/></svg>
<span class="t" style="left:590.80px;top:422px;font-size:7.8px;color:#23292e;letter-spacing:-0.228px;">System - Action s...</span>
<span class="t" style="left:662.40px;top:425px;font-size:5.7px;color:#4a5258;letter-spacing:-0.196px;">23 days ago</span>
<svg class="b" style="left:701.00px;top:424.80px;" width="7" height="5" viewBox="0 0 7 5"><path d="M.7 1L3.500 3.800 6.300 1" fill="none" stroke="#4a555d" stroke-width=".8"/></svg>
<svg class="b" style="left:573.20px;top:439.40px;" width="11" height="11" viewBox="0 0 11 11"><rect width="11" height="11" rx="2" fill="#f5c451"/><rect x="2.800" y="5" width="5.400" height="4" rx=".6" fill="#2b2f33"/><path d="M3.900 5V3.900a1.600 1.600 0 0 1 3.200 0V5" fill="none" stroke="#2b2f33" stroke-width=".9"/></svg>
<span class="t" style="left:590.80px;top:442px;font-size:7.6px;color:#23292e;letter-spacing:-0.290px;">John Jaso...</span>
<span class="t" style="left:662.40px;top:445px;font-size:5.7px;color:#4a5258;letter-spacing:-0.196px;">23 days ago</span>
<svg class="b" style="left:701.00px;top:444.60px;" width="7" height="5" viewBox="0 0 7 5"><path d="M.7 1L3.500 3.800 6.300 1" fill="none" stroke="#4a555d" stroke-width=".8"/></svg>
<div class="b" style="left:636.20px;top:443.40px;width:21.40px;height:6.30px;background:#f7d57d;border-radius:1px;"></div>
<span class="t" style="left:638.00px;top:444px;font-size:5.4px;color:#33322a;letter-spacing:-0.026px;">Internal</span>
<svg class="b" style="left:573.20px;top:459.10px;" width="11" height="11" viewBox="0 0 11 11"><rect width="11" height="11" rx="2" fill="#4fbfca"/><rect x="2.300" y="3" width="6" height="4.300" rx=".5" fill="#1f4f6a"/><path d="M2.500 3.300l2.800 2.200 2.800-2.200" fill="none" stroke="#59c4cf" stroke-width=".5"/><circle cx="7.600" cy="7.300" r="1.400" fill="#1f4f6a"/></svg>
<span class="t" style="left:590.80px;top:461px;font-size:7.6px;color:#23292e;letter-spacing:-0.323px;">System - Case CS...</span>
<span class="t" style="left:662.40px;top:464px;font-size:5.7px;color:#4a5258;letter-spacing:-0.196px;">23 days ago</span>
<svg class="b" style="left:701.00px;top:464.30px;" width="7" height="5" viewBox="0 0 7 5"><path d="M.7 1L3.500 3.800 6.300 1" fill="none" stroke="#4a555d" stroke-width=".8"/></svg>
<svg class="b" style="left:573.20px;top:478.70px;" width="11" height="11" viewBox="0 0 11 11"><rect width="11" height="11" rx="2" fill="#cf7a63"/><path d="M2.800 8.200l.5-2 3.800-3.800 1.500 1.500-3.800 3.800z" fill="#2b2f33"/></svg>
<span class="t" style="left:590.80px;top:481px;font-size:7.7px;color:#23292e;letter-spacing:-0.253px;">John Jason - Assi...</span>
<span class="t" style="left:662.40px;top:484px;font-size:5.7px;color:#4a5258;letter-spacing:-0.196px;">23 days ago</span>
<svg class="b" style="left:701.00px;top:483.90px;" width="7" height="5" viewBox="0 0 7 5"><path d="M.7 1L3.500 3.800 6.300 1" fill="none" stroke="#4a555d" stroke-width=".8"/></svg>
<div class="b" style="left:718.00px;top:175.00px;width:22.00px;height:365.00px;background:#c0d9e6;"></div>
<div class="b" style="left:717.30px;top:177.50px;width:1.50px;height:16.30px;background:#567f90;"></div>
<svg class="b" style="left:720.00px;top:177.00px" width="19" height="19" viewBox="0 0 19 19"><circle cx="8.7" cy="8.7" r="7.5" fill="#fff"/></svg>
<svg class="b" style="left:724.70px;top:182.70px;" width="8" height="6" viewBox="0 0 8 6"><rect x="3.300" y=".3" width="4.200" height="5.400" fill="#2f9a4a"/><path d="M.4 1.200h2.200M.4 3h2.200M.4 4.800h2.200" stroke="#2f9a4a" stroke-width=".9"/></svg>
<svg class="b" style="left:724.70px;top:200.50px;" width="8" height="8" viewBox="0 0 8 8"><path d="M.6 2.700L4 1.100l3.400 1.600L4 4.300zM1.900 3.500v2.100c.5.700 1.200 1 2.100 1s1.600-.3 2.100-1V3.500" fill="none" stroke="#1f3d52" stroke-width=".9" stroke-linejoin="round"/></svg>
<svg class="b" style="left:724.70px;top:219.30px;" width="8" height="8" viewBox="0 0 8 8"><circle cx="4.300" cy="3.300" r="2.600" fill="none" stroke="#1f3d52" stroke-width=".9"/><path d="M.9 7.300l1.700-1.900M6 5.500l1.500 1.800M.8 5.600h1.700v1.600" fill="none" stroke="#1f3d52" stroke-width=".9"/></svg>
<svg class="b" style="left:724.70px;top:238.10px;" width="8" height="8" viewBox="0 0 8 8"><path d="M.8 1.300h2.300l.8 1h3.300v4.600H.8z" fill="none" stroke="#1f3d52" stroke-width=".9" stroke-linejoin="round"/><path d="M2.900 3.900h4M2.900 6.900V4" stroke="#1f3d52" stroke-width=".8"/></svg>
<svg class="b" style="left:724.70px;top:256.80px;" width="8" height="8" viewBox="0 0 8 8"><path d="M6.600 3.500L3.900 6.200a1.500 1.500 0 0 1 -2.100-2.100l3-3a1 1 0 0 1 1.500 1.500l-2.900 2.900M3 3.100l2 2" fill="none" stroke="#1f3d52" stroke-width=".9" stroke-linecap="round"/></svg>
<svg class="b" style="left:724.70px;top:275.50px;" width="8" height="8" viewBox="0 0 8 8"><path d="M1.400.8h3.300l1.900 1.900v4.500H1.400z" fill="none" stroke="#1f3d52" stroke-width=".9" stroke-linejoin="round"/><path d="M2.200 4.200h3.800v2.600H2.200z" fill="#1f3d52"/><path d="M4.500 1v1.900h1.900" fill="none" stroke="#1f3d52" stroke-width=".7"/></svg>
<svg class="b" style="left:724.70px;top:294.30px;" width="8" height="8" viewBox="0 0 8 8"><rect x=".7" y="1.200" width="6.600" height="5.600" rx=".5" fill="none" stroke="#1f3d52" stroke-width=".9"/><path d="M1 1.500l3 2.600 3-2.600M1 6.500l2.200-2M7 6.500l-2.200-2" fill="none" stroke="#1f3d52" stroke-width=".7"/><path d="M1.500 6.300h5" stroke="#1f3d52" stroke-width=".8"/></svg>
<svg class="b" style="left:724.70px;top:313.00px;" width="8" height="8" viewBox="0 0 8 8"><path d="M1.400.8h3.300l1.900 1.900v4.500H1.400z" fill="none" stroke="#1f3d52" stroke-width=".9" stroke-linejoin="round"/><path d="M2.600 3.800h2.800v2H2.600z" fill="none" stroke="#1f3d52" stroke-width=".7"/></svg>
<svg class="b" style="left:724.70px;top:331.60px;" width="8" height="8" viewBox="0 0 8 8"><circle cx="4" cy="4" r="3.200" fill="none" stroke="#1f3d52" stroke-width=".9"/><path d="M2 5l1.400-1.400 1 .9 1.600-1.700M4.800 2.700h1.300V4" fill="none" stroke="#1f3d52" stroke-width=".7"/></svg>
<svg class="b" style="left:752.80px;top:88.30px;" width="6" height="6" viewBox="0 0 6 6"><path d="M3.200.2c.25 1.700.8 2.250 2.500 2.500-1.700.25-2.250.8-2.500 2.500-.25-1.700-.8-2.250-2.500-2.500 1.700-.25 2.250-.8 2.500-2.500z" fill="#f2f6f8"/><circle cx="1.100" cy="5" r=".7" fill="#f2f6f8"/></svg>
<div class="b" style="left:747.50px;top:102.00px;width:15.00px;height:1.30px;background:#8fb0c2;"></div>
<span class="t" style="left:747.50px;top:111px;font-size:7.9px;color:#fff;letter-spacing:-0.193px;">Now Assist</span>
<svg class="b" style="left:858.50px;top:110.50px;" width="3" height="7" viewBox="0 0 3 7"><circle cx="1.500" cy="1.200" r=".7" fill="#fff"/><circle cx="1.500" cy="3.300" r=".7" fill="#fff"/><circle cx="1.500" cy="5.400" r=".7" fill="#fff"/></svg>
<svg class="b" style="left:871.00px;top:109.50px;" width="8" height="8" viewBox="0 0 8 8"><path d="M3.300.3c.45 2.200 1 2.800 3.200 3.200-2.200.45-2.750 1-3.200 3.200-.45-2.200-1-2.750-3.200-3.200 2.200-.4 2.750-1 3.200-3.200z" fill="#fff" stroke="#fff" stroke-width=".5" stroke-linejoin="round"/><path d="M6.300 4.300c.2 1.150.55 1.500 1.700 1.700-1.150.2-1.500.55-1.700 1.700-.2-1.150-.55-1.500-1.700-1.700 1.150-.2 1.500-.55 1.700-1.700z" fill="#fff" stroke="#fff" stroke-width=".3"/></svg>
<div class="b" style="left:747.50px;top:122.70px;width:133.00px;height:1.00px;background:#3a5568;"></div>
<span class="t" style="left:755.00px;top:140px;font-size:7.7px;color:#f3f6f8;letter-spacing:-0.165px;-webkit-text-stroke:.18px #f3f6f8;">Answers generated by AI. Review for</span>
<span class="t" style="left:800.00px;top:150px;font-size:7.6px;color:#f3f6f8;letter-spacing:-0.184px;-webkit-text-stroke:.18px #f3f6f8;">accuracy.</span>
<div class="b" style="left:763.00px;top:168.00px;width:119.00px;height:25.50px;background:#365063;border-radius:5px;"></div>
<span class="t" style="left:769.20px;top:172px;font-size:7.7px;color:#f3f6f8;letter-spacing:-0.188px;-webkit-text-stroke:.18px #f3f6f8;">Hi John! How can I help you</span>
<span class="t" style="left:769.20px;top:182px;font-size:7.9px;color:#f3f6f8;letter-spacing:-0.076px;-webkit-text-stroke:.18px #f3f6f8;">with your work today?</span>
<div class="b" style="left:763.00px;top:197.00px;width:119.00px;height:63.00px;background:#365063;border-radius:5px;"></div>
<span class="t" style="left:769.20px;top:202px;font-size:7.7px;color:#f3f6f8;letter-spacing:-0.172px;-webkit-text-stroke:.18px #f3f6f8;">To give you an idea of what I do</span>
<span class="t" style="left:769.20px;top:211px;font-size:7.7px;color:#f3f6f8;letter-spacing:-0.126px;-webkit-text-stroke:.18px #f3f6f8;">really well, try asking me to:</span>
<span class="t" style="left:778.30px;top:220px;font-size:7.7px;color:#f3f6f8;letter-spacing:-0.146px;-webkit-text-stroke:.18px #f3f6f8;">generate a kb article</span>
<svg class="b" style="left:771.00px;top:221.00px" width="6.3" height="6.3" viewBox="0 0 6.3 6.3"><circle cx="2.7" cy="2.7" r="1.15" fill="#f3f6f8"/></svg>
<span class="t" style="left:778.30px;top:230px;font-size:7.7px;color:#f3f6f8;letter-spacing:-0.136px;-webkit-text-stroke:.18px #f3f6f8;">Generate resolution notes</span>
<svg class="b" style="left:771.00px;top:231.00px" width="6.3" height="6.3" viewBox="0 0 6.3 6.3"><circle cx="2.7" cy="2.7" r="1.15" fill="#f3f6f8"/></svg>
<span class="t" style="left:778.30px;top:239px;font-size:7.6px;color:#f3f6f8;letter-spacing:-0.235px;-webkit-text-stroke:.18px #f3f6f8;">Summarize a record</span>
<svg class="b" style="left:771.00px;top:240.00px" width="6.3" height="6.3" viewBox="0 0 6.3 6.3"><circle cx="2.7" cy="2.7" r="1.15" fill="#f3f6f8"/></svg>
<span class="t" style="left:778.30px;top:249px;font-size:7.7px;color:#f3f6f8;letter-spacing:-0.229px;-webkit-text-stroke:.18px #f3f6f8;">Summarize conversation</span>
<svg class="b" style="left:771.00px;top:250.00px" width="6.3" height="6.3" viewBox="0 0 6.3 6.3"><circle cx="2.7" cy="2.7" r="1.15" fill="#f3f6f8"/></svg>
<svg class="b" style="left:747.00px;top:248.00px" width="15" height="15" viewBox="0 0 15 15"><circle cx="6.7" cy="7" r="5.5" fill="#f6f0e2"/></svg>
<svg class="b" style="left:751.50px;top:253.00px;" width="5" height="4" viewBox="0 0 5 4"><path d="M.7 2.100l1.200 1.200L4.300.8" fill="none" stroke="#4a5a66" stroke-width=".7"/></svg>
<div class="b" style="left:806.30px;top:267.40px;width:75.70px;height:16.40px;background:#3b81a7;border-radius:6px 6px 1px 6px;"></div>
<span class="t" style="left:812.00px;top:272px;font-size:7.6px;color:#fff;letter-spacing:-0.257px;">Summarize a record</span>
<div class="b" style="left:763.30px;top:290.80px;width:118.70px;height:26.20px;background:#365063;border-radius:5px;"></div>
<span class="t" style="left:768.80px;top:296px;font-size:7.7px;color:#f3f6f8;letter-spacing:-0.199px;-webkit-text-stroke:.18px #f3f6f8;">Here is a summary of</span>
<span class="t" style="left:768.80px;top:305px;font-size:7.7px;color:#f3f6f8;letter-spacing:-0.211px;-webkit-text-stroke:.18px #f3f6f8;">CS0020025:</span>
<div class="b" style="left:763.30px;top:320.00px;width:118.70px;height:138.40px;background:#365063;border-radius:5px;"></div>
<span class="t" style="left:768.80px;top:325px;font-size:7.6px;color:#f3f6f8;letter-spacing:-0.192px;-webkit-text-stroke:.18px #f3f6f8;">issue:</span>
<span class="t" style="left:768.80px;top:334px;font-size:7.7px;color:#f3f6f8;letter-spacing:-0.187px;-webkit-text-stroke:.18px #f3f6f8;">Security camera issue in building</span>
<span class="t" style="left:768.80px;top:343px;font-size:8.1px;color:#f3f6f8;-webkit-text-stroke:.18px #f3f6f8;">3</span>
<span class="t" style="left:768.80px;top:353px;font-size:7.7px;color:#f3f6f8;letter-spacing:-0.179px;-webkit-text-stroke:.18px #f3f6f8;">Key Actions Taken:</span>
<span class="t" style="left:778.50px;top:362px;font-size:7.6px;color:#f3f6f8;letter-spacing:-0.221px;-webkit-text-stroke:.18px #f3f6f8;">Case task created</span>
<svg class="b" style="left:771.00px;top:363.00px" width="6.3" height="6.3" viewBox="0 0 6.3 6.3"><circle cx="2.5" cy="2.7" r="1.15" fill="#f3f6f8"/></svg>
<span class="t" style="left:778.50px;top:372px;font-size:7.6px;color:#f3f6f8;letter-spacing:-0.176px;-webkit-text-stroke:.18px #f3f6f8;">State changed to closed</span>
<svg class="b" style="left:771.00px;top:373.00px" width="6.3" height="6.3" viewBox="0 0 6.3 6.3"><circle cx="2.5" cy="2.7" r="1.15" fill="#f3f6f8"/></svg>
<span class="t" style="left:778.50px;top:381px;font-size:7.7px;color:#f3f6f8;letter-spacing:-0.144px;-webkit-text-stroke:.18px #f3f6f8;">Customer requested to check</span>
<svg class="b" style="left:771.00px;top:382.00px" width="6.3" height="6.3" viewBox="0 0 6.3 6.3"><circle cx="2.5" cy="2.7" r="1.15" fill="#f3f6f8"/></svg>
<span class="t" style="left:778.50px;top:390px;font-size:7.8px;color:#f3f6f8;letter-spacing:-0.170px;-webkit-text-stroke:.18px #f3f6f8;">firmware version</span>
<span class="t" style="left:778.50px;top:400px;font-size:7.8px;color:#f3f6f8;letter-spacing:-0.170px;-webkit-text-stroke:.18px #f3f6f8;">Customer updated firmware</span>
<svg class="b" style="left:771.00px;top:401.00px" width="6.3" height="6.3" viewBox="0 0 6.3 6.3"><circle cx="2.5" cy="2.7" r="1.15" fill="#f3f6f8"/></svg>
<span class="t" style="left:768.80px;top:409px;font-size:7.7px;color:#f3f6f8;letter-spacing:-0.189px;-webkit-text-stroke:.18px #f3f6f8;">Service Level Agreement:</span>
<span class="t" style="left:768.80px;top:418px;font-size:7.7px;color:#f3f6f8;letter-spacing:-0.174px;-webkit-text-stroke:.18px #f3f6f8;">SLA: Case - Priority 3-4</span>
<span class="t" style="left:768.80px;top:428px;font-size:7.7px;color:#f3f6f8;letter-spacing:-0.171px;-webkit-text-stroke:.18px #f3f6f8;">resolution (1 day), State: In</span>
<span class="t" style="left:768.80px;top:437px;font-size:7.7px;color:#f3f6f8;letter-spacing:-0.185px;-webkit-text-stroke:.18px #f3f6f8;">progress, Breached on: 2025-</span>
<span class="t" style="left:768.80px;top:447px;font-size:7.9px;color:#f3f6f8;letter-spacing:-0.068px;-webkit-text-stroke:.18px #f3f6f8;">01-15 07:33:52</span>
<div class="b" style="left:747.40px;top:511.10px;width:135.10px;height:17.60px;border:1px solid #435f72;border-radius:3px;"></div>
<span class="t" style="left:751.80px;top:516px;font-size:7.7px;color:#d5dde3;letter-spacing:-0.160px;">Ask Now Assist to...</span>
<svg class="b" style="left:868.50px;top:515.50px;" width="8" height="7" viewBox="0 0 8 7"><path d="M.6.500L7.400 3.500.6 6.500l1-3z" fill="#4d697c"/></svg>
</div></body></html>
